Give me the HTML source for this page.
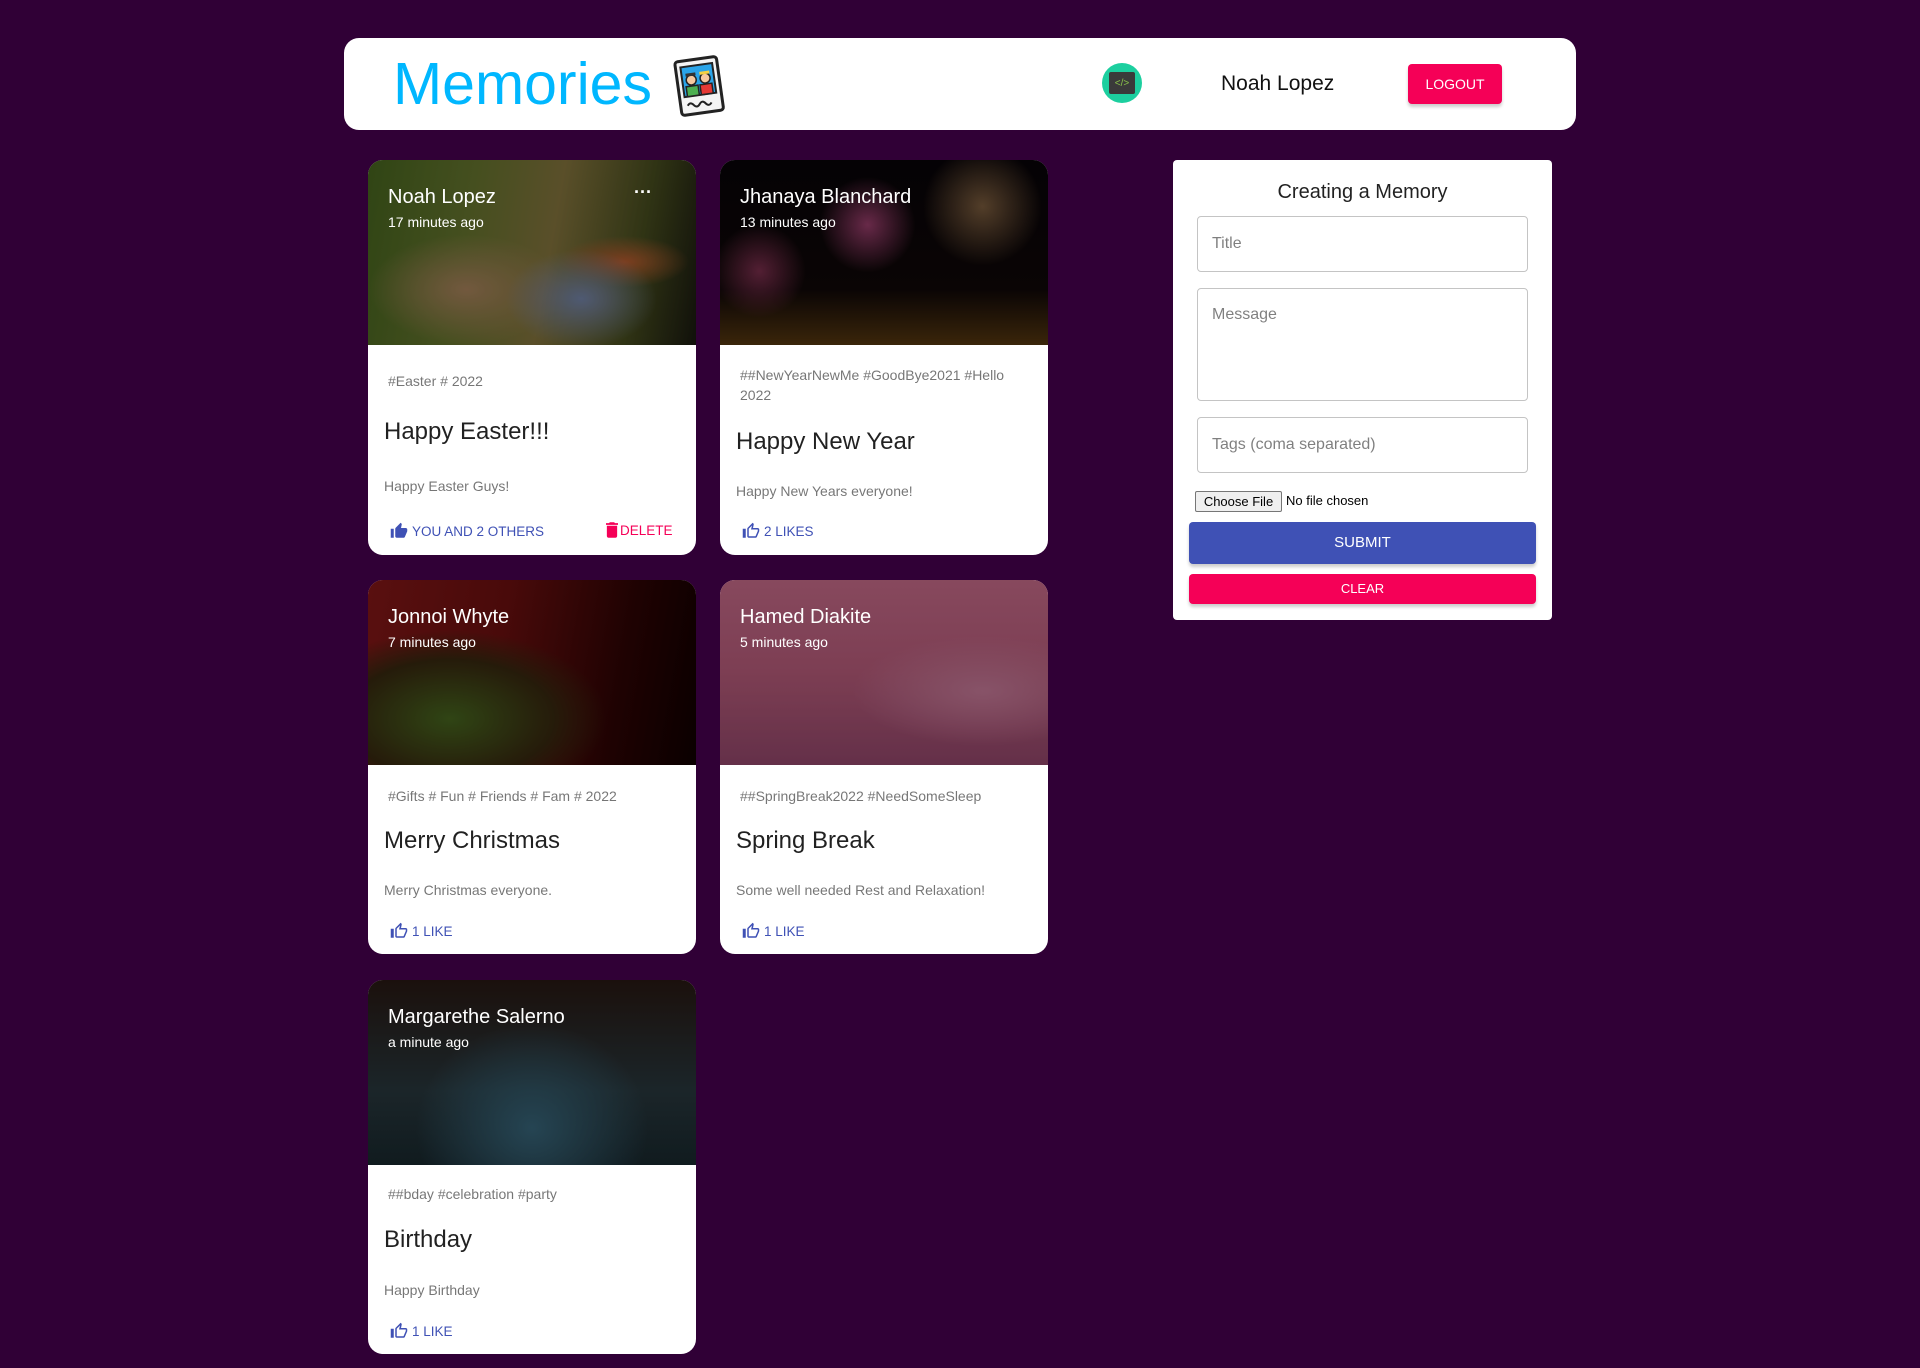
<!DOCTYPE html>
<html><head><meta charset="utf-8"><style>
*{margin:0;padding:0;box-sizing:border-box}
body{width:1920px;height:1368px;background:#300036;font-family:"Liberation Sans",Arial,sans-serif;position:relative;overflow:hidden}
.abs{position:absolute}
.hdr{left:344px;top:38px;width:1232px;height:92px;background:#fff;border-radius:15px}
.card{position:absolute;width:328px;background:#fff;border-radius:15px;overflow:hidden}
.img{position:absolute;left:0;top:0;width:328px;height:185px}
.img::after{content:"";position:absolute;inset:0;background:rgba(0,0,0,.35)}
.nm{position:absolute;left:20px;top:26px;color:#fff;font-size:20px;z-index:2}
.tm{position:absolute;left:20px;top:54px;color:#fff;font-size:14px;z-index:2}
.tags{position:absolute;left:20px;width:290px;color:rgba(0,0,0,.54);font-size:14px;line-height:20px}
.ttl{position:absolute;left:16px;color:rgba(0,0,0,.87);font-size:24px}
.msg{position:absolute;left:16px;color:rgba(0,0,0,.54);font-size:14px}
.act{position:absolute;left:22px;color:#3f51b5;font-size:13.5px;display:flex;align-items:center;gap:4px}
.field{position:absolute;left:1197px;width:331px;border:1px solid #c4c4c4;border-radius:4px;color:rgba(0,0,0,.5);font-size:16px;padding-left:14px}
</style></head><body>
<div class="abs hdr"></div>
<div class="abs" style="left:393px;top:51px;font-size:59px;color:#00b7ff;line-height:66px">Memories</div>
<svg class="abs" style="left:668px;top:53px" width="62" height="64" viewBox="0 0 62 64">
<g transform="rotate(-8 31 32)"><rect x="10" y="6" width="42" height="54" rx="3" fill="#f4f4f4" stroke="#222" stroke-width="3"/>
<rect x="15" y="12" width="32" height="30" fill="#2aa4e8" stroke="#222" stroke-width="2"/>
<circle cx="24" cy="26" r="5" fill="#f7c9a0" stroke="#222" stroke-width="1.5"/><path d="M19 22h10v-3H19z" fill="#333"/>
<rect x="18" y="32" width="12" height="10" fill="#4caf50" stroke="#222" stroke-width="1.5"/>
<circle cx="38" cy="26" r="5" fill="#f7c9a0" stroke="#222" stroke-width="1.5"/><path d="M33 22h10v-3H33z" fill="#f5d142"/>
<rect x="32" y="32" width="12" height="10" fill="#e53935" stroke="#222" stroke-width="1.5"/>
<path d="M17 51q3-4 6 0t6 0t6 0t6 0" fill="none" stroke="#222" stroke-width="2"/></g></svg>
<div class="abs" style="left:1102px;top:63px;width:40px;height:40px;border-radius:50%;background:#1ccf9f"></div>
<div class="abs" style="left:1109px;top:72px;width:26px;height:22px;background:#3a3a3a;border-radius:2px;color:#8bc34a;font-size:10px;text-align:center;line-height:24px">&lt;/&gt;</div>
<div class="abs" style="left:1221px;top:72px;font-size:21px;color:#111">Noah Lopez</div>
<div class="abs" style="left:1408px;top:64px;width:94px;height:40px;background:#f50057;border-radius:4px;color:#fff;font-size:14px;text-align:center;line-height:40px;box-shadow:0 3px 3px rgba(0,0,0,.2)">LOGOUT</div>

<!-- card 1 -->
<div class="card" style="left:368px;top:160px;height:395px">
<div class="img" style="background:radial-gradient(ellipse at 65% 75%,#7a8ab0 0,transparent 25%),radial-gradient(ellipse at 30% 70%,#b08860 0,transparent 30%),radial-gradient(ellipse at 78% 55%,#c06030 0,transparent 18%),linear-gradient(100deg,#4a6a20 0%,#6a7a30 30%,#8a7a40 55%,#4a5020 80%,#1a1a10 100%)"></div>
<div class="nm">Noah Lopez</div><div class="tm">17 minutes ago</div>
<div class="abs" style="left:266px;top:22px;color:#fff;font-size:18px;z-index:2;font-weight:bold">···</div>
<div class="tags" style="top:211px">#Easter # 2022</div>
<div class="ttl" style="top:258px">Happy Easter!!!</div>
<div class="msg" style="top:318px">Happy Easter Guys!</div>
<div class="act" style="top:362px"><svg width="18" height="18" viewBox="0 0 24 24"><path fill="#3f51b5" d="M1 21h4V9H1v12zm22-11c0-1.1-.9-2-2-2h-6.31l.95-4.57.03-.32c0-.41-.17-.79-.44-1.06L14.17 1 7.59 7.59C7.22 7.95 7 8.45 7 9v10c0 1.1.9 2 2 2h9c.83 0 1.54-.5 1.84-1.22l3.02-7.05c.09-.23.14-.47.14-.73v-2z"/></svg>YOU AND 2 OTHERS</div>
<div class="act" style="top:362px;left:238px;color:#f50057;gap:2px"><svg width="12" height="16" viewBox="5 3 14 18"><path fill="#f50057" d="M6 19c0 1.1.9 2 2 2h8c1.1 0 2-.9 2-2V7H6v12zM19 4h-3.5l-1-1h-5l-1 1H5v2h14V4z"/></svg>DELETE</div>
</div>

<!-- card 2 -->
<div class="card" style="left:720px;top:160px;height:395px">
<div class="img" style="background:radial-gradient(circle at 45% 35%,#a04070 0,transparent 22%),radial-gradient(circle at 80% 25%,#806040 0,transparent 20%),radial-gradient(circle at 12% 60%,#803050 0,transparent 15%),linear-gradient(180deg,#080408 0%,#100808 70%,#5a3a10 100%)"></div>
<div class="nm">Jhanaya Blanchard</div><div class="tm">13 minutes ago</div>
<div class="tags" style="top:205px">##NewYearNewMe #GoodBye2021 #Hello 2022</div>
<div class="ttl" style="top:268px">Happy New Year</div>
<div class="msg" style="top:323px">Happy New Years everyone!</div>
<div class="act" style="top:362px"><svg width="18" height="18" viewBox="0 0 24 24"><path fill="#3f51b5" d="M9 21h9c.83 0 1.54-.5 1.84-1.22l3.02-7.05c.09-.23.14-.47.14-.73v-2c0-1.1-.9-2-2-2h-6.31l.95-4.57.03-.32c0-.41-.17-.79-.44-1.06L14.17 1 7.58 7.59C7.22 7.95 7 8.45 7 9v10c0 1.1.9 2 2 2zM9 9l4.34-4.34L12 10h9v2l-3 7H9V9zM1 9h4v12H1z"/></svg>2 LIKES</div>
</div>

<!-- card 3 -->
<div class="card" style="left:368px;top:580px;height:374px">
<div class="img" style="background:radial-gradient(ellipse at 25% 75%,#4a6a20 0,#3a2a10 30%,transparent 45%),linear-gradient(100deg,#8a1818 0%,#701010 40%,#300404 75%,#100000 100%)"></div>
<div class="nm">Jonnoi Whyte</div><div class="tm">7 minutes ago</div>
<div class="tags" style="top:206px">#Gifts # Fun # Friends # Fam # 2022</div>
<div class="ttl" style="top:247px">Merry Christmas</div>
<div class="msg" style="top:302px">Merry Christmas everyone.</div>
<div class="act" style="top:342px"><svg width="18" height="18" viewBox="0 0 24 24"><path fill="#3f51b5" d="M9 21h9c.83 0 1.54-.5 1.84-1.22l3.02-7.05c.09-.23.14-.47.14-.73v-2c0-1.1-.9-2-2-2h-6.31l.95-4.57.03-.32c0-.41-.17-.79-.44-1.06L14.17 1 7.58 7.59C7.22 7.95 7 8.45 7 9v10c0 1.1.9 2 2 2zM9 9l4.34-4.34L12 10h9v2l-3 7H9V9zM1 9h4v12H1z"/></svg>1 LIKE</div>
</div>

<!-- card 4 -->
<div class="card" style="left:720px;top:580px;height:374px">
<div class="img" style="background:radial-gradient(ellipse at 80% 60%,#d080a0 0,transparent 35%),linear-gradient(180deg,#d07090 0%,#c06080 50%,#9a4a70 100%)"></div>
<div class="nm">Hamed Diakite</div><div class="tm">5 minutes ago</div>
<div class="tags" style="top:206px">##SpringBreak2022 #NeedSomeSleep</div>
<div class="ttl" style="top:247px">Spring Break</div>
<div class="msg" style="top:302px">Some well needed Rest and Relaxation!</div>
<div class="act" style="top:342px"><svg width="18" height="18" viewBox="0 0 24 24"><path fill="#3f51b5" d="M9 21h9c.83 0 1.54-.5 1.84-1.22l3.02-7.05c.09-.23.14-.47.14-.73v-2c0-1.1-.9-2-2-2h-6.31l.95-4.57.03-.32c0-.41-.17-.79-.44-1.06L14.17 1 7.58 7.59C7.22 7.95 7 8.45 7 9v10c0 1.1.9 2 2 2zM9 9l4.34-4.34L12 10h9v2l-3 7H9V9zM1 9h4v12H1z"/></svg>1 LIKE</div>
</div>

<!-- card 5 -->
<div class="card" style="left:368px;top:980px;height:374px">
<div class="img" style="background:radial-gradient(ellipse at 50% 80%,#3a6a80 0,transparent 50%),linear-gradient(180deg,#2a1a14 0%,#2a3a40 60%,#1a2a30 100%)"></div>
<div class="nm">Margarethe Salerno</div><div class="tm">a minute ago</div>
<div class="tags" style="top:204px">##bday #celebration #party</div>
<div class="ttl" style="top:246px">Birthday</div>
<div class="msg" style="top:302px">Happy Birthday</div>
<div class="act" style="top:342px"><svg width="18" height="18" viewBox="0 0 24 24"><path fill="#3f51b5" d="M9 21h9c.83 0 1.54-.5 1.84-1.22l3.02-7.05c.09-.23.14-.47.14-.73v-2c0-1.1-.9-2-2-2h-6.31l.95-4.57.03-.32c0-.41-.17-.79-.44-1.06L14.17 1 7.58 7.59C7.22 7.95 7 8.45 7 9v10c0 1.1.9 2 2 2zM9 9l4.34-4.34L12 10h9v2l-3 7H9V9zM1 9h4v12H1z"/></svg>1 LIKE</div>
</div>

<!-- form -->
<div class="abs" style="left:1173px;top:160px;width:379px;height:460px;background:#fff;border-radius:4px"></div>
<div class="abs" style="left:1173px;top:181px;width:379px;text-align:center;font-size:20px;color:rgba(0,0,0,.87)">Creating a Memory</div>
<div class="field" style="top:216px;height:56px;line-height:54px">Title</div>
<div class="field" style="top:288px;height:113px;padding-top:17px">Message</div>
<div class="field" style="top:417px;height:56px;line-height:54px">Tags (coma separated)</div>
<div class="abs" style="left:1195px;top:491px;width:87px;height:21px;border:1px solid #767676;border-radius:2px;background:#efefef;font-size:13px;text-align:center;line-height:19px;color:#000">Choose File</div>
<div class="abs" style="left:1286px;top:493px;font-size:13px;color:#000">No file chosen</div>
<div class="abs" style="left:1189px;top:522px;width:347px;height:42px;background:#3f51b5;border-radius:4px;color:#fff;font-size:15px;text-align:center;line-height:42px;box-shadow:0 3px 3px rgba(0,0,0,.2)">SUBMIT</div>
<div class="abs" style="left:1189px;top:574px;width:347px;height:30px;background:#f50057;border-radius:4px;color:#fff;font-size:13px;text-align:center;line-height:29px;box-shadow:0 3px 3px rgba(0,0,0,.2)">CLEAR</div>
</body></html>
